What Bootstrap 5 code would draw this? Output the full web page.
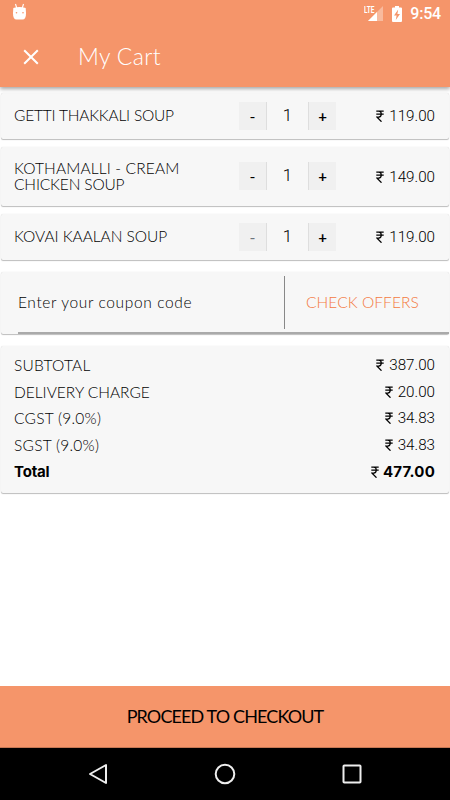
<!DOCTYPE html>
<html lang="en">
<head>
<meta charset="utf-8">
<meta name="viewport" content="width=device-width, initial-scale=1">
<title>My Cart</title>
<link href="https://cdn.jsdelivr.net/npm/bootstrap@5.3.0/dist/css/bootstrap.min.css" rel="stylesheet">
<style>
body{width:450px;height:800px;overflow:hidden;font-family:Lato,"Liberation Sans",sans-serif;font-weight:300;font-size:15.5px;line-height:16px;color:#000;background:#fff}
.app-header{height:87px;background:#f5956a;color:#fff;box-shadow:0 2px 4px rgba(0,0,0,.35);z-index:2;flex:none}
.status-bar{height:27px;padding:0 9px 0 12px}
.clock{font:500 16px/27px Roboto,sans-serif;letter-spacing:-.2px}
.title-bar{height:60px;padding-left:23px}
.page-title{font-family:Lato,sans-serif;font-weight:300;font-size:23px;line-height:28px;letter-spacing:.35px;margin-left:39px;padding-bottom:3px}
.panel{background:#f7f7f7;border-radius:2px;box-shadow:0 1px 1px rgba(0,0,0,.25),0 0 1px rgba(0,0,0,.16);margin:0 1px 0 1px;padding:0 13px 0 13px;flex:none}
.item{height:46px;margin-bottom:8px}
.item-tall{height:59px}
.item-name{width:225px;padding-bottom:2px}
.qty{width:97px;height:28px}
.step{width:28px;background:#f0f0f0;font:400 16px/26px Lato,sans-serif;text-align:center;border:0;padding:0}
.step-minus{border-right:1px solid #dedede}
.step-plus{border-left:1px solid #dedede;font-weight:700;font-size:15px}
.item-tall .qty{margin-top:-1px}
.count{font:300 17px/26px Roboto,sans-serif}
.price{font:300 15.2px/16px Roboto,sans-serif;white-space:nowrap;margin-right:1px}
.price svg{margin-right:5px;vertical-align:-1px}
.coupon{height:62px;margin-top:4px;margin-bottom:12px;padding:0 0 0 17px}
.coupon-row{border-bottom:2px solid #aaa;height:62px}
.coupon-entry{width:267px;height:53px;border-right:1px solid #888;line-height:52px;margin-top:4px}
.offers{color:#f47a42;line-height:60px;padding-left:21px}
.summary{height:147px;padding-top:6px}
.sum-row{height:26.7px;padding-bottom:1px}
.sum-row.grand,.grand .price{font-family:Inter,sans-serif;font-weight:700;letter-spacing:-.2px;font-size:15px}
.grand{padding-bottom:0}
.grand .price{letter-spacing:.2px}
.grand .price svg{margin-right:4px}
.checkout{height:62px;background:#f5956a;border:0;border-radius:0;border-bottom:1px solid #c57754;color:#000;font:400 18px/61px Lato,sans-serif;padding:0;flex:none}
.nav-keys{height:52px;background:#000;flex:none;padding:0 87px}
.s1{letter-spacing:-.2px}.s2{letter-spacing:.15px}.s2b{letter-spacing:-.15px}.s3{letter-spacing:-.03px}.s4{letter-spacing:.63px}.s5{letter-spacing:.08px}.s6{letter-spacing:.2px}.s7{letter-spacing:0}.s8{letter-spacing:.25px}.s9{letter-spacing:-.88px}
</style>
<script src="https://cdn.jsdelivr.net/npm/bootstrap@5.3.0/dist/js/bootstrap.bundle.min.js"></script>
</head>
<body class="d-flex flex-column">
<svg width="0" height="0" class="position-absolute"><symbol id="rupee" viewBox="0 0 8 12"><path d="M.3 1h7.400M.3 4h7.400M.5 1h2.200c3.400 0 3.400 6 0 6H.8l4.700 4.700" fill="none" stroke="currentColor" stroke-width="1.250"/></symbol></svg>
<header class="app-header position-relative">
  <div class="status-bar d-flex justify-content-between align-items-center">
    <svg class="mb-1" width="15" height="18" viewBox="0 0 15 18"><path d="M3.500 1l1.200 4M11.500 1l-1.200 4" stroke="#fff" stroke-width="1.100"/><path d="M1.300 5q6.200-1.800 12.400 0l.3 5.500q0 6-3.500 6h-6q-3.500 0-3.500-6z" fill="#fff"/><circle cx="4.500" cy="9.800" r=".8" fill="#f5956a"/><circle cx="11" cy="9.800" r=".8" fill="#f5956a"/></svg>
    <div class="d-flex align-items-center">
      <svg width="20" height="18" viewBox="0 0 20 18"><path d="M19 1v15H4z" fill="#fff" fill-opacity=".35"/><path d="M13 7v9H4z" fill="#fff"/><text x="0" y="8" font-family="Roboto" font-weight="700" font-size="9.500" textLength="10.500" lengthAdjust="spacingAndGlyphs" fill="#fff">LTE</text></svg>
      <svg class="ms-2" width="10" height="16" viewBox="0 0 10 16"><path d="M3 0h4v1.500h2q1 0 1 1V15q0 1-1 1H1q-1 0-1-1V2.500q0-1 1-1h2z" fill="#fff"/><path d="M6.200 3.500L2 9.500h2.600L3.800 14 8 8H5.400z" fill="#f5956a"/></svg>
      <span class="clock ms-2">9:54</span>
    </div>
  </div>
  <div class="title-bar d-flex align-items-center">
    <svg width="16" height="16" viewBox="0 0 16 16"><path d="M1.200 1.200l13.600 13.600M14.800 1.200L1.200 14.800" stroke="#fff" stroke-width="2"/></svg>
    <h1 class="page-title mb-0">My Cart</h1>
  </div>
</header>
<main class="flex-grow-1 d-flex flex-column pt-2" style="margin-top:-2px">
  <section class="panel item d-flex align-items-center">
    <div class="item-name s1">GETTI THAKKALI SOUP</div>
    <div class="qty d-flex justify-content-between"><button class="step step-minus">-</button><span class="count">1</span><button class="step step-plus">+</button></div>
    <div class="price ms-auto"><svg width="8" height="12"><use href="#rupee"/></svg>119.00</div>
  </section>
  <section class="panel item item-tall d-flex align-items-center">
    <div class="item-name s2">KOTHAMALLI - CREAM<br><span class="s2b">CHICKEN SOUP</span></div>
    <div class="qty d-flex justify-content-between"><button class="step step-minus">-</button><span class="count">1</span><button class="step step-plus">+</button></div>
    <div class="price ms-auto"><svg width="8" height="12"><use href="#rupee"/></svg>149.00</div>
  </section>
  <section class="panel item d-flex align-items-center">
    <div class="item-name s3">KOVAI KAALAN SOUP</div>
    <div class="qty d-flex justify-content-between"><button class="step step-minus text-secondary">-</button><span class="count">1</span><button class="step step-plus">+</button></div>
    <div class="price ms-auto"><svg width="8" height="12"><use href="#rupee"/></svg>119.00</div>
  </section>
  <section class="panel coupon">
    <div class="coupon-row d-flex"><div class="coupon-entry s4">Enter your coupon code</div><div class="offers s5">CHECK OFFERS</div></div>
  </section>
  <section class="panel summary">
    <div class="sum-row d-flex align-items-center justify-content-between"><span class="s6">SUBTOTAL</span><span class="price"><svg width="8" height="12"><use href="#rupee"/></svg>387.00</span></div>
    <div class="sum-row d-flex align-items-center justify-content-between"><span class="s7">DELIVERY CHARGE</span><span class="price"><svg width="8" height="12"><use href="#rupee"/></svg>20.00</span></div>
    <div class="sum-row d-flex align-items-center justify-content-between"><span class="s8">CGST (9.0%)</span><span class="price"><svg width="8" height="12"><use href="#rupee"/></svg>34.83</span></div>
    <div class="sum-row d-flex align-items-center justify-content-between"><span class="s8">SGST (9.0%)</span><span class="price"><svg width="8" height="12"><use href="#rupee"/></svg>34.83</span></div>
    <div class="sum-row grand d-flex align-items-center justify-content-between"><span>Total</span><span class="price"><svg width="8" height="12"><use href="#rupee"/></svg>477.00</span></div>
  </section>
</main>
<button class="checkout w-100 s9">PROCEED TO CHECKOUT</button>
<nav class="nav-keys d-flex align-items-center justify-content-between">
  <svg width="22" height="22" viewBox="0 0 22 22"><path d="M19 2v18L3 11z" fill="none" stroke="#eee" stroke-width="2" stroke-linejoin="round"/></svg>
  <svg width="22" height="22" viewBox="0 0 22 22"><circle cx="11" cy="11" r="9.300" fill="none" stroke="#eee" stroke-width="2"/></svg>
  <svg width="22" height="22" viewBox="0 0 22 22"><rect x="2.500" y="2.500" width="17" height="17" rx=".8" fill="none" stroke="#eee" stroke-width="2"/></svg>
</nav>
</body>
</html>
